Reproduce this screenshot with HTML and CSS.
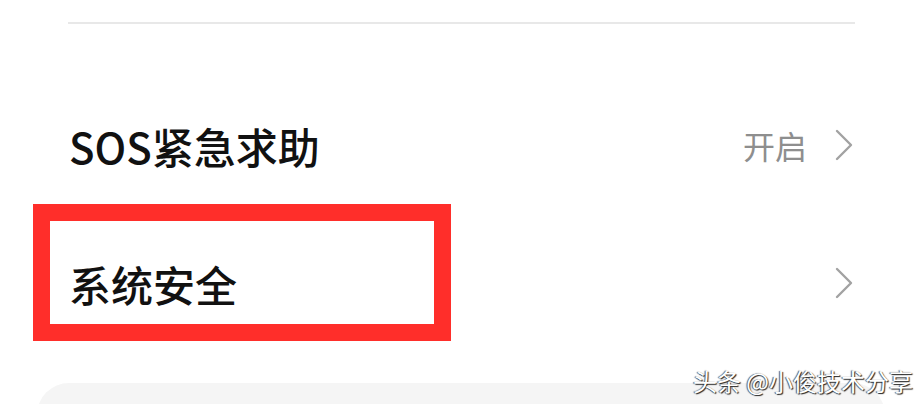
FILE: index.html
```html
<!DOCTYPE html>
<html lang="zh-CN">
<head>
<meta charset="utf-8">
<title>设置</title>
<link rel="stylesheet" href="styles.css">
</head>
<body>
<div class="screen">
  <div class="divider"></div>
  <div class="list">
    <div class="row">
      <span class="title">SOS紧急求助</span>
      <span class="value">开启</span>
      <svg class="chev" width="18" height="32" viewBox="0 0 18 32"><polyline points="2,2 16,16 2,30" fill="none" stroke="#a2a2a2" stroke-width="2.4" stroke-linecap="round" stroke-linejoin="round"/></svg>
    </div>
    <div class="row">
      <span class="title">系统安全</span>
      <svg class="chev" width="18" height="32" viewBox="0 0 18 32"><polyline points="2,2 16,16 2,30" fill="none" stroke="#a2a2a2" stroke-width="2.4" stroke-linecap="round" stroke-linejoin="round"/></svg>
    </div>
  </div>
  <div class="card"></div>
  <div class="highlight"></div>
  <div class="watermark">头条 @小俊技术分享</div>
</div>
</body>
</html>
```
FILE: styles.css
```css
html, body {
  margin: 0;
  padding: 0;
  background: #ffffff;
}
.screen {
  position: relative;
  width: 923px;
  height: 404px;
  overflow: hidden;
  background: #ffffff;
  font-family: "Noto Sans CJK SC", "Noto Sans", sans-serif;
}
.divider {
  margin: 22px 68px 0 68px;
  height: 2px;
  background: #e8e8e8;
}
.list {
  margin-top: 52px;
}
.row {
  display: flex;
  align-items: center;
  height: 138px;
  padding: 0 70px 0 69px;
}
.title {
  flex: 1;
  font-size: 42px;
  font-weight: 500;
  color: #111111;
}
.value {
  font-size: 32px;
  color: #8e8e8e;
  margin-right: 28px;
}
.chev {
  display: block;
}
.card {
  margin: 31px 38px 0 37px;
  height: 60px;
  background: #f5f5f5;
  border-radius: 32px 32px 0 0;
}
.highlight {
  position: absolute;
  left: 33px;
  top: 204px;
  width: 384px;
  height: 103px;
  border: 17px solid #ff2e2a;
}
.watermark {
  position: absolute;
  right: 10px;
  top: 363px;
  font-size: 24px;
  color: #ffffff;
  text-shadow: 1px 1px 1px #222222, -1px 0 1px #555555;
}
```
